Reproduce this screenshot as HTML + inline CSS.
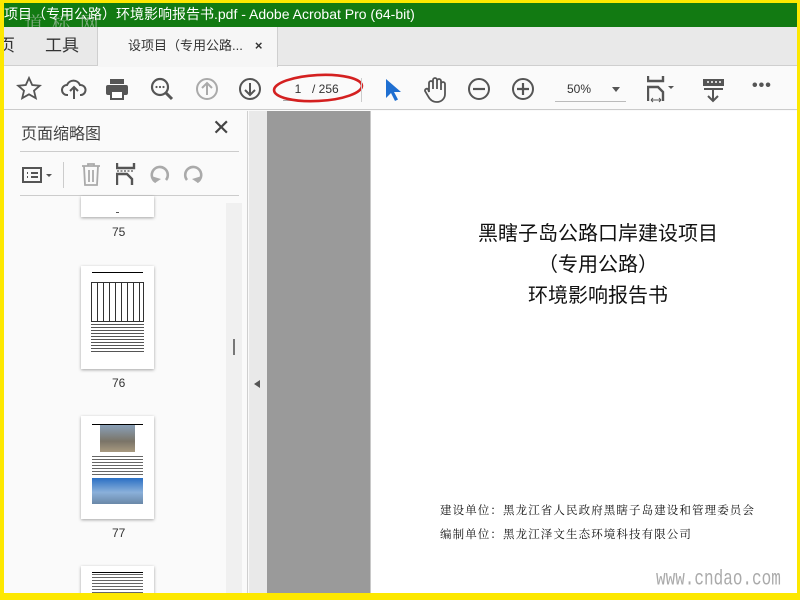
<!DOCTYPE html>
<html><head><meta charset="utf-8"><style>
*{margin:0;padding:0;box-sizing:border-box}
body{width:800px;height:600px;overflow:hidden;background:#fde800;font-family:"Liberation Sans","Noto Sans CJK SC",sans-serif;position:relative}
.a{position:absolute}
svg{position:absolute}
</style></head><body>
<div class="a" style="left:4px;top:3px;width:793px;height:590px;background:#fafafa;overflow:hidden">
 <div class="a" style="left:0;top:0;width:793px;height:24px;background:#127a12;color:#fff;font-size:14px;line-height:22px;white-space:nowrap">项目（专用公路）环境影响报告书.pdf - Adobe Acrobat Pro (64-bit)</div>
 <div class="a" style="left:20px;top:6px;color:rgba(210,210,210,.55);font-family:'Noto Serif CJK SC',serif;font-size:19px;letter-spacing:2px">道 标 网</div>
 <div class="a" style="left:0;top:24px;width:793px;height:39px;background:#e9e9e9;border-bottom:1px solid #cfcfcf"></div>
 <div class="a" style="left:0;top:24px;width:94px;height:39px;border-right:1px solid #cfcfcf;font-size:17px;color:#333;line-height:38px"><span style="margin-left:-6px">页</span><span style="margin-left:30px">工具</span></div>
 <div class="a" style="left:94px;top:24px;width:180px;height:40px;background:#f6f6f6;border-right:1px solid #cfcfcf;font-size:13px;color:#333;line-height:38px;padding-left:30px">设项目（专用公路...<span style="margin-left:12px;font-weight:bold;font-size:13px">×</span></div>
 <div class="a" style="left:0;top:64px;width:793px;height:43px;background:#fafafa;border-bottom:1px solid #cbcbcb"></div>
 <svg style="left:12px;top:73px" width="26" height="26" viewBox="0 0 26 26"><path d="M13 2l3.2 7 7.6.7-5.8 5 1.8 7.5L13 18.3 6.2 22.2 8 14.7 2.2 9.7l7.6-.7z" fill="none" stroke="#555" stroke-width="1.8"/></svg>
 <svg style="left:57px;top:73px" width="26" height="26" viewBox="0 0 26 26"><path d="M7 19H6a5 5 0 0 1 0-10 7 7 0 0 1 13 0 5 5 0 0 1 1 10h-1M13 23V11M9 15l4-4 4 4" fill="none" stroke="#555" stroke-width="2"/></svg>
 <svg style="left:100px;top:73px" width="26" height="26" viewBox="0 0 26 26"><rect x="6" y="3" width="14" height="5" fill="#555"/><rect x="2" y="9" width="22" height="10" rx="2" fill="#555"/><rect x="7" y="15" width="12" height="8" fill="#fff" stroke="#555" stroke-width="2"/></svg>
 <svg style="left:145px;top:73px" width="26" height="26" viewBox="0 0 26 26"><circle cx="11" cy="11" r="8" fill="none" stroke="#555" stroke-width="2.2"/><path d="M17 17l6 6" stroke="#555" stroke-width="3"/><circle cx="7.5" cy="11" r="1.1" fill="#555"/><circle cx="11" cy="11" r="1.1" fill="#555"/><circle cx="14.5" cy="11" r="1.1" fill="#555"/></svg>
 <svg style="left:190px;top:73px" width="26" height="26" viewBox="0 0 26 26"><circle cx="13" cy="13" r="10" fill="none" stroke="#aaa" stroke-width="2"/><path d="M13 19V7M8 12l5-5 5 5" fill="none" stroke="#aaa" stroke-width="2"/></svg>
 <svg style="left:233px;top:73px" width="26" height="26" viewBox="0 0 26 26"><circle cx="13" cy="13" r="10" fill="none" stroke="#555" stroke-width="2"/><path d="M13 7v12M8 14l5 5 5-5" fill="none" stroke="#555" stroke-width="2"/></svg>
 <div class="a" style="left:279px;top:76px;width:30px;height:22px;border-bottom:1px solid #aaa;font-size:12px;color:#333;text-align:center;line-height:20px">1</div>
 <div class="a" style="left:308px;top:76px;font-size:12px;color:#333;line-height:20px">/ 256</div>
 <svg style="left:266px;top:67px" width="96" height="36" viewBox="0 0 96 36"><ellipse cx="48" cy="18" rx="44" ry="13" fill="none" stroke="#d42020" stroke-width="2.6" transform="rotate(-3 48 18)"/></svg>
 <div class="a" style="left:357px;top:75px;width:1px;height:24px;background:#ccc"></div>
 <svg style="left:378px;top:74px" width="20" height="26" viewBox="0 0 20 26"><path d="M4 2v19l5-5 4 8 3-1.5-4-7.5h7z" fill="#1f6fd1"/></svg>
 <svg style="left:419px;top:73px" width="26" height="28" viewBox="0 0 26 28"><path d="M6 16V7a2 2 0 0 1 4 0v6V4a2 2 0 0 1 4 0v9V5a2 2 0 0 1 4 0v9V8a2 2 0 0 1 4 0v10c0 5-4 8-8 8s-7-2-9-6l-3-5a2 2 0 0 1 3-2z" fill="none" stroke="#555" stroke-width="1.8"/></svg>
 <svg style="left:462px;top:73px" width="26" height="26" viewBox="0 0 26 26"><circle cx="13" cy="13" r="10" fill="none" stroke="#555" stroke-width="2"/><path d="M7 13h12" stroke="#555" stroke-width="2.2"/></svg>
 <svg style="left:506px;top:73px" width="26" height="26" viewBox="0 0 26 26"><circle cx="13" cy="13" r="10" fill="none" stroke="#555" stroke-width="2"/><path d="M7 13h12M13 7v12" stroke="#555" stroke-width="2.2"/></svg>
 <div class="a" style="left:551px;top:76px;width:71px;height:23px;border-bottom:1px solid #bbb;font-size:12px;color:#333;line-height:20px;padding-left:12px">50%</div>
 <div class="a" style="left:608px;top:84px;border:4px solid transparent;border-top:5px solid #555"></div>
 <svg style="left:643px;top:72px" width="30" height="30" viewBox="0 0 30 30"><path d="M1 1v5h15V1M1 26V12h10l5 5v9" fill="none" stroke="#555" stroke-width="2.4"/><path d="M4 25h10M4 25l2-2M4 25l2 2M14 25l-2-2M14 25l-2 2" stroke="#555" stroke-width="1"/><path d="M21 11l3 3 3-3z" fill="#555"/></svg>
 <svg style="left:698px;top:74px" width="26" height="26" viewBox="0 0 26 26"><rect x="1" y="2" width="21" height="7" fill="#555"/><path d="M5 5h2M9 5h2M13 5h2M17 5h2" stroke="#fff" stroke-width="1.4"/><path d="M2 12h19M11 12v12M6 19l5 5 5-5" fill="none" stroke="#555" stroke-width="2"/></svg>
 <div class="a" style="left:748px;top:74px;font-size:16px;color:#555;letter-spacing:1px;font-weight:bold">•••</div>
 <div class="a" style="left:0;top:108px;width:244px;height:485px;background:#fafafa;border-right:1px solid #cfcfcf"></div>
 <div class="a" style="left:17px;top:117px;font-size:16px;color:#444">页面缩略图</div>
 <div class="a" style="left:208px;top:112px;font-size:22px;color:#444">✕</div>
 <div class="a" style="left:16px;top:148px;width:219px;height:1px;background:#ccc"></div>
 <div class="a" style="left:16px;top:192px;width:219px;height:1px;background:#ccc"></div>
 <svg style="left:17px;top:160px" width="36" height="24" viewBox="0 0 36 24"><rect x="2" y="5" width="18" height="14" fill="none" stroke="#555" stroke-width="2"/><path d="M6 10h1M6 14h1M10 10h7M10 14h7" stroke="#555" stroke-width="2"/><path d="M25 11l3 3 3-3z" fill="#555"/></svg>
 <div class="a" style="left:59px;top:159px;width:1px;height:26px;background:#ccc"></div>
 <svg style="left:77px;top:159px" width="20" height="24" viewBox="0 0 20 24"><path d="M1 4h18M7 4V2h6v2M3 4l1 19h12l1-19M8 8v12M12 8v12" fill="none" stroke="#aaa" stroke-width="1.8"/></svg>
 <svg style="left:112px;top:159px" width="22" height="24" viewBox="0 0 22 24"><path d="M1 1v5h17V1M1 23V12h10l5 5v6" fill="none" stroke="#555" stroke-width="2.4"/><path d="M1 9h17" stroke="#555" stroke-width="1.2" stroke-dasharray="2 1.5"/></svg>
 <svg style="left:145px;top:160px" width="22" height="22" viewBox="0 0 22 22"><path d="M7 19A8 8 0 1 1 17 17" fill="none" stroke="#aaa" stroke-width="2.6"/><path d="M2 13l4 7 6-4z" fill="#aaa"/></svg>
 <svg style="left:178px;top:160px" width="22" height="22" viewBox="0 0 22 22"><path d="M15 19A8 8 0 1 0 5 17" fill="none" stroke="#aaa" stroke-width="2.6"/><path d="M20 13l-4 7-6-4z" fill="#aaa"/></svg>
 <div class="a" style="left:222px;top:200px;width:16px;height:393px;background:#f0f0f0"></div>
 <div class="a" style="left:229px;top:336px;width:2px;height:16px;background:#777"></div>
 <div class="a" style="left:77px;top:193px;width:73px;height:21px;background:#fff;box-shadow:0 1px 3px rgba(0,0,0,.35)"><div class="a" style="left:35px;top:16px;width:3px;height:1px;background:#555"></div></div>
 <div class="a" style="left:108px;top:222px;font-size:12px;color:#333">75</div>
 <div class="a" style="left:77px;top:263px;width:73px;height:103px;background:#fff;box-shadow:0 1px 3px rgba(0,0,0,.35)">
  <div class="a" style="left:11px;top:6px;width:51px;height:1px;background:#000"></div>
  <div class="a" style="left:10px;top:16px;width:53px;height:40px;border:1px solid #000;background:repeating-linear-gradient(90deg,#fff 0 5px,#000 5px 6px),#fff;opacity:.8"></div>
  <div class="a" style="left:10px;top:58px;width:53px;height:28px;background:repeating-linear-gradient(#555 0 1px,#fff 1px 3px)"></div>
 </div>
 <div class="a" style="left:108px;top:373px;font-size:12px;color:#333">76</div>
 <div class="a" style="left:77px;top:413px;width:73px;height:103px;background:#fff;box-shadow:0 1px 3px rgba(0,0,0,.35)">
  <div class="a" style="left:11px;top:8px;width:51px;height:1px;background:#000"></div>
  <div class="a" style="left:19px;top:9px;width:35px;height:27px;background:linear-gradient(#8aa0b8,#7a7468 60%,#a89a80)"></div>
  <div class="a" style="left:11px;top:40px;width:51px;height:20px;background:repeating-linear-gradient(#666 0 1px,#fff 1px 3px)"></div>
  <div class="a" style="left:11px;top:62px;width:51px;height:26px;background:linear-gradient(#2a6fc4,#8ab0da 55%,#6a88a8)"></div>
 </div>
 <div class="a" style="left:108px;top:523px;font-size:12px;color:#333">77</div>
 <div class="a" style="left:77px;top:563px;width:73px;height:40px;background:#fff;box-shadow:0 1px 3px rgba(0,0,0,.35)">
  <div class="a" style="left:11px;top:6px;width:51px;height:1px;background:#000"></div>
  <div class="a" style="left:11px;top:8px;width:51px;height:20px;background:repeating-linear-gradient(#666 0 1px,#fff 1px 3px)"></div>
  <div class="a" style="left:17px;top:28px;width:38px;height:10px;background:#6a9ad0"></div>
 </div>
 <div class="a" style="left:245px;top:108px;width:18px;height:485px;background:#e9e9e9"></div>
 <div class="a" style="left:250px;top:377px;border:4px solid transparent;border-right:6px solid #555;border-left:0"></div>
 <div class="a" style="left:263px;top:108px;width:104px;height:485px;background:#9a9a9a;border-right:1px solid #c8c8c8"></div>
 <div class="a" style="left:367px;top:108px;width:426px;height:485px;background:#fff"></div>
 <div class="a" style="left:384px;top:213px;width:420px;text-align:center;font-family:'Noto Sans CJK SC',sans-serif;font-size:20px;color:#111;line-height:31px">黑瞎子岛公路口岸建设项目<br>（专用公路）<br>环境影响报告书</div>
 <div class="a" style="left:436px;top:495px;font-family:'Noto Serif CJK SC',serif;font-size:11.5px;color:#111;letter-spacing:1.1px;line-height:24px;white-space:nowrap">建设单位：黑龙江省人民政府黑瞎子岛建设和管理委员会<br>编制单位：黑龙江泽文生态环境科技有限公司</div>
 <div class="a" style="left:652px;top:564px;font-family:'Liberation Mono',monospace;font-size:16px;color:#aaa;transform:scaleY(1.35);transform-origin:top left">www.cndao.com</div>
</div>
</body></html>
